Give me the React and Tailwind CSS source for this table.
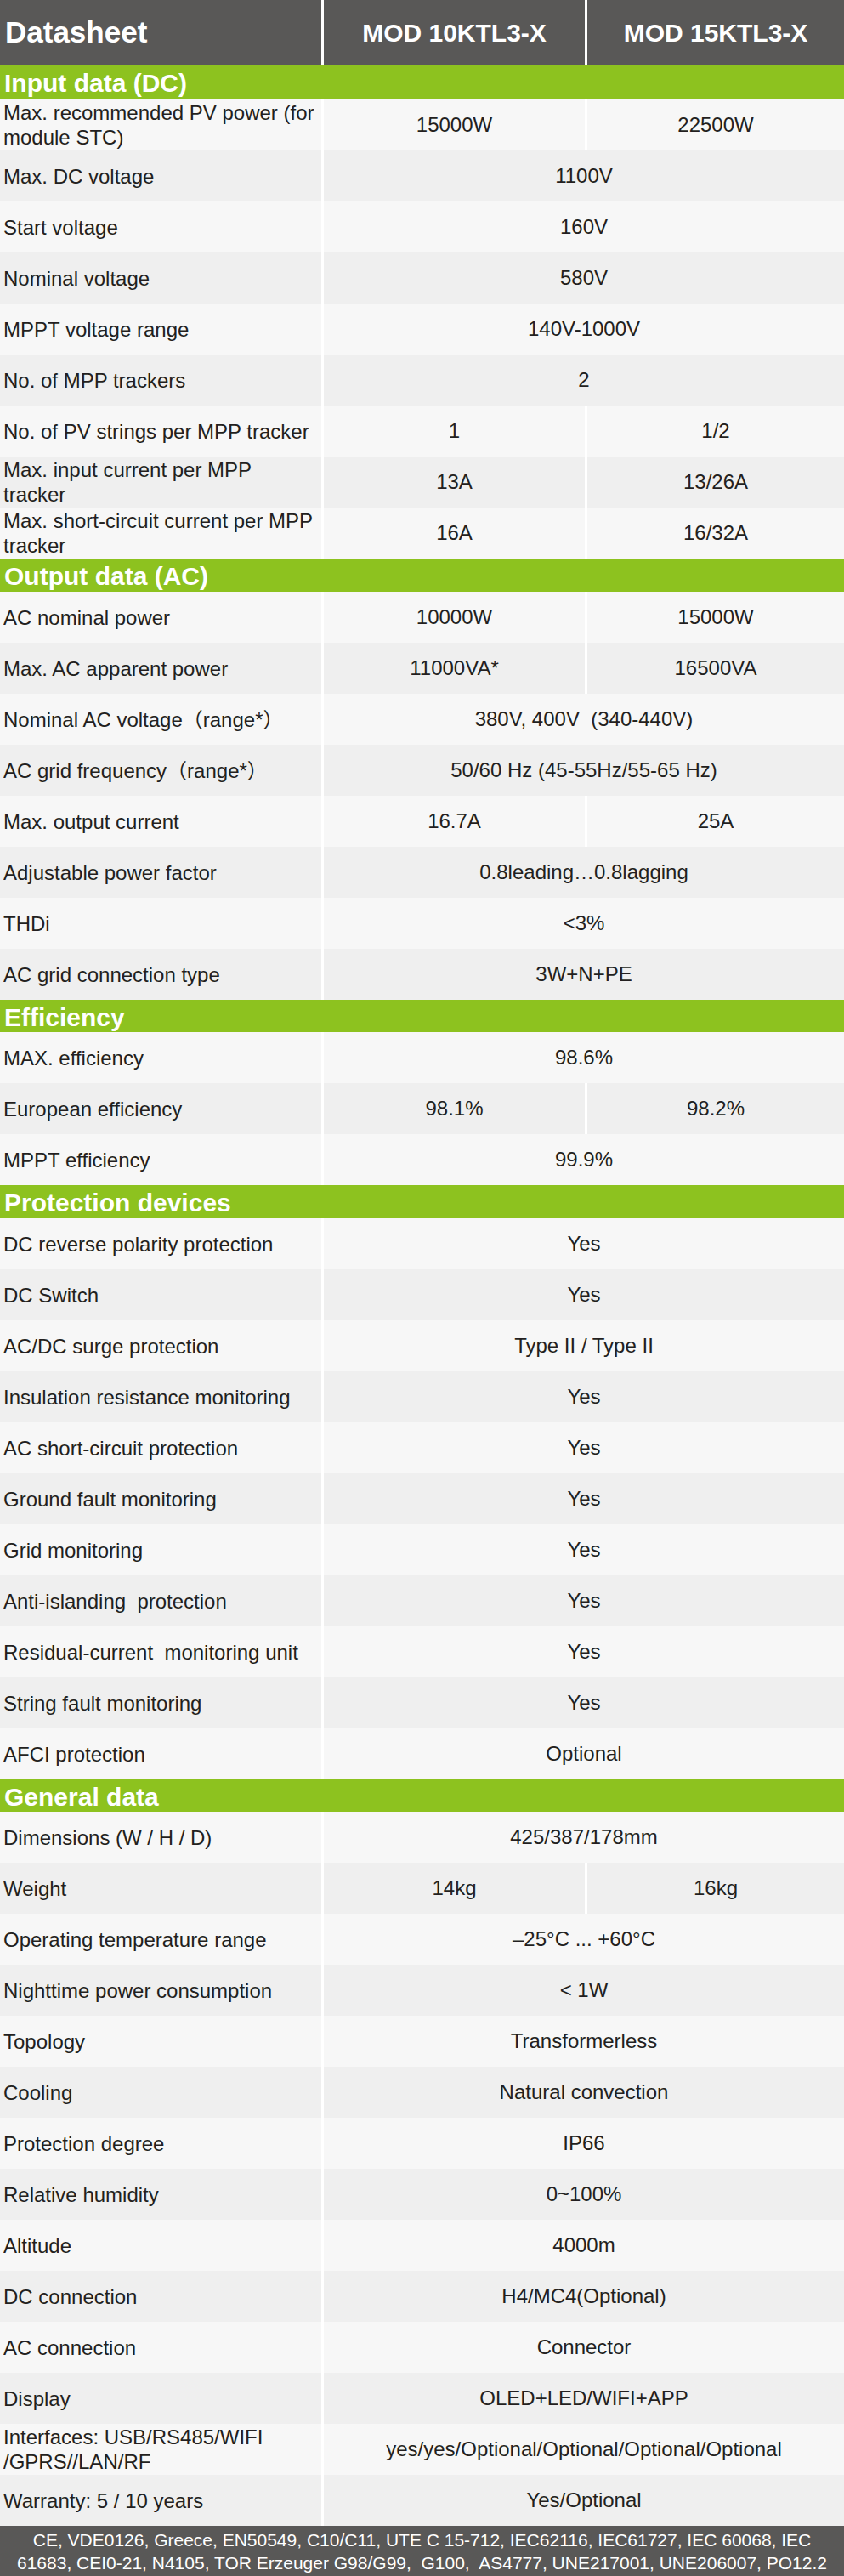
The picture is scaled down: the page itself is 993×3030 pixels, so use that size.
import React from 'react';

const sections = [
  {
    title: 'Input data (DC)',
    h: 'h-[41px]',
    rows: [
      [['Max. recommended PV power (for', 'module STC)'], ['15000W', '22500W']],
      ['Max. DC voltage', '1100V'],
      ['Start voltage', '160V'],
      ['Nominal voltage', '580V'],
      ['MPPT voltage range', '140V-1000V'],
      ['No. of MPP trackers', '2'],
      ['No. of PV strings per MPP tracker', ['1', '1/2']],
      [['Max. input current per MPP', 'tracker'], ['13A', '13/26A']],
      [['Max. short-circuit current per MPP', 'tracker'], ['16A', '16/32A']],
    ],
  },
  {
    title: 'Output data (AC)',
    h: 'h-[39px]',
    rows: [
      ['AC nominal power', ['10000W', '15000W']],
      ['Max. AC apparent power', ['11000VA*', '16500VA']],
      ['Nominal AC voltage（range*）', '380V, 400V  (340-440V)'],
      ['AC grid frequency（range*）', '50/60 Hz (45-55Hz/55-65 Hz)'],
      ['Max. output current', ['16.7A', '25A']],
      ['Adjustable power factor', '0.8leading…0.8lagging'],
      ['THDi', '<3%'],
      ['AC grid connection type', '3W+N+PE'],
    ],
  },
  {
    title: 'Efficiency',
    h: 'h-[38px]',
    rows: [
      ['MAX. efficiency', '98.6%'],
      ['European efficiency', ['98.1%', '98.2%']],
      ['MPPT efficiency', '99.9%'],
    ],
  },
  {
    title: 'Protection devices',
    h: 'h-[39px]',
    rows: [
      ['DC reverse polarity protection', 'Yes'],
      ['DC Switch', 'Yes'],
      ['AC/DC surge protection', 'Type II / Type II'],
      ['Insulation resistance monitoring', 'Yes'],
      ['AC short-circuit protection', 'Yes'],
      ['Ground fault monitoring', 'Yes'],
      ['Grid monitoring', 'Yes'],
      ['Anti-islanding  protection', 'Yes'],
      ['Residual-current  monitoring unit', 'Yes'],
      ['String fault monitoring', 'Yes'],
      ['AFCI protection', 'Optional'],
    ],
  },
  {
    title: 'General data',
    h: 'h-[38px]',
    rows: [
      ['Dimensions (W / H / D)', '425/387/178mm'],
      ['Weight', ['14kg', '16kg']],
      ['Operating temperature range', '–25°C ... +60°C'],
      ['Nighttime power consumption', '< 1W'],
      ['Topology', 'Transformerless'],
      ['Cooling', 'Natural convection'],
      ['Protection degree', 'IP66'],
      ['Relative humidity', '0~100%'],
      ['Altitude', '4000m'],
      ['DC connection', 'H4/MC4(Optional)'],
      ['AC connection', 'Connector'],
      ['Display', 'OLED+LED/WIFI+APP'],
      [['Interfaces: USB/RS485/WIFI', '/GPRS//LAN/RF'], 'yes/yes/Optional/Optional/Optional/Optional'],
      ['Warranty: 5 / 10 years', 'Yes/Optional'],
    ],
  },
];

function Row({ label, value, shade }) {
  const lines = Array.isArray(label) ? label : [label];
  return (
    <div className={`flex h-[60px] ${shade ? 'bg-[#efefef]' : 'bg-[#f7f7f7]'}`}>
      <div className="w-[378px] pl-1 flex flex-col justify-center leading-[29px] whitespace-pre">
        {lines.map((l) => (
          <span key={l}>{l}</span>
        ))}
      </div>
      {Array.isArray(value) ? (
        <div className="flex-1 flex border-l-[3px] border-white">
          <div className="w-[307px] flex items-center justify-center whitespace-pre">{value[0]}</div>
          <div className="flex-1 flex items-center justify-center border-l-[3px] border-white whitespace-pre">
            {value[1]}
          </div>
        </div>
      ) : (
        <div className="flex-1 flex items-center justify-center border-l-[3px] border-white whitespace-pre">
          {value}
        </div>
      )}
    </div>
  );
}

export default function App() {
  return (
    <div
      className="w-[993px] text-[24px] text-[#231f20]"
      style={{ fontFamily: '"Liberation Sans", Arial, "Noto Sans CJK SC", sans-serif' }}
    >
      {/* Header */}
      <div className="flex h-[76px] bg-[#595857] text-white font-bold">
        <div className="w-[378px] pl-[6px] flex items-center text-[35px]">Datasheet</div>
        <div className="w-[310px] flex items-center justify-center text-[30px] border-l-[3px] border-white">
          MOD 10KTL3-X
        </div>
        <div className="flex-1 flex items-center justify-center text-[30px] border-l-[3px] border-white">
          MOD 15KTL3-X
        </div>
      </div>

      {sections.map((s) => (
        <div key={s.title}>
          <div className={`${s.h} bg-[#8dc21f] text-white font-bold text-[30px] pl-[5px] flex items-center pt-[2px]`}>
            {s.title}
          </div>
          {s.rows.map(([label, value], i) => (
            <Row key={i} label={label} value={value} shade={i % 2 === 1} />
          ))}
        </div>
      ))}

      {/* Footer */}
      <div className="h-[59px] bg-[#595857] text-white text-[21px] leading-[27px] flex flex-col items-center justify-center whitespace-pre">
        <span>CE, VDE0126, Greece, EN50549, C10/C11, UTE C 15-712, IEC62116, IEC61727, IEC 60068, IEC</span>
        <span>61683, CEI0-21, N4105, TOR Erzeuger G98/G99,  G100,  AS4777, UNE217001, UNE206007, PO12.2</span>
      </div>
    </div>
  );
}
